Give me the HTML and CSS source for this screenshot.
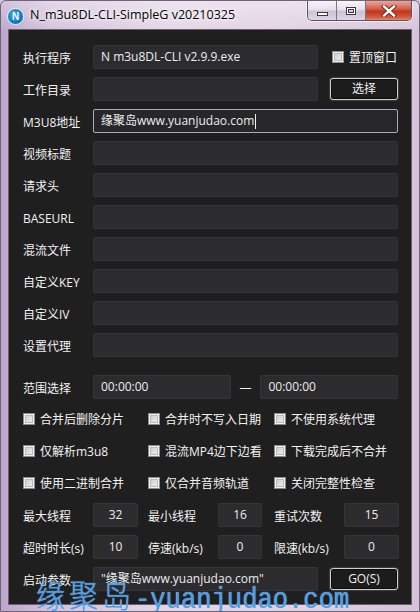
FILE: index.html
```html
<!DOCTYPE html>
<html>
<head>
<meta charset="utf-8">
<link rel="stylesheet" href="styles.css">
</head>
<body>
<div class="window">
  <div class="titlebar">
    <span class="app-icon">N</span>
    <span class="title">N_m3u8DL-CLI-SimpleG v20210325</span>
    <div class="caption">
      <span class="cbtn min"><i></i></span>
      <span class="cbtn max"><i></i></span>
      <span class="cbtn close">
        <svg width="16" height="12" viewBox="0 0 16 12"><path d="M3 1.5 L13 10.5 M13 1.5 L3 10.5" stroke="#5a2a22" stroke-width="4.2" stroke-linecap="square"/><path d="M3 1.5 L13 10.5 M13 1.5 L3 10.5" stroke="#ffffff" stroke-width="2.4" stroke-linecap="square"/></svg>
      </span>
    </div>
  </div>
  <div class="client">
    <div class="row">
      <span class="lbl">执行程序</span>
      <div class="field short">N m3u8DL-CLI v2.9.9.exe</div>
      <span class="chk topmost"><span class="box"></span>置顶窗口</span>
    </div>
    <div class="row">
      <span class="lbl">工作目录</span>
      <div class="field short"></div>
      <span class="btn">选择</span>
    </div>
    <div class="row">
      <span class="lbl">M3U8地址</span>
      <div class="field full focus">缘聚岛www.yuanjudao.com<span class="caret"></span></div>
    </div>
    <div class="row"><span class="lbl">视频标题</span><div class="field full"></div></div>
    <div class="row"><span class="lbl">请求头</span><div class="field full"></div></div>
    <div class="row"><span class="lbl">BASEURL</span><div class="field full"></div></div>
    <div class="row"><span class="lbl">混流文件</span><div class="field full"></div></div>
    <div class="row"><span class="lbl">自定义KEY</span><div class="field full"></div></div>
    <div class="row"><span class="lbl">自定义IV</span><div class="field full"></div></div>
    <div class="row"><span class="lbl">设置代理</span><div class="field full"></div></div>

    <div class="row range">
      <span class="lbl">范围选择</span>
      <div class="field half">00:00:00</div>
      <span class="dash">—</span>
      <div class="field half">00:00:00</div>
    </div>

    <div class="checks">
      <span class="chk"><span class="box"></span>合并后删除分片</span>
      <span class="chk"><span class="box"></span>合并时不写入日期</span>
      <span class="chk"><span class="box"></span>不使用系统代理</span>
    </div>
    <div class="checks">
      <span class="chk"><span class="box"></span>仅解析m3u8</span>
      <span class="chk"><span class="box"></span>混流MP4边下边看</span>
      <span class="chk"><span class="box"></span>下载完成后不合并</span>
    </div>
    <div class="checks">
      <span class="chk"><span class="box"></span>使用二进制合并</span>
      <span class="chk"><span class="box"></span>仅合并音频轨道</span>
      <span class="chk"><span class="box"></span>关闭完整性检查</span>
    </div>

    <div class="nums">
      <span class="lbl">最大线程</span><div class="field num n1">32</div>
      <span class="lbl">最小线程</span><div class="field num n2">16</div>
      <span class="lbl">重试次数</span><div class="field num n3">15</div>
    </div>
    <div class="nums">
      <span class="lbl">超时时长(s)</span><div class="field num n1">10</div>
      <span class="lbl">停速(kb/s)</span><div class="field num n2">0</div>
      <span class="lbl">限速(kb/s)</span><div class="field num n3">0</div>
    </div>

    <div class="row">
      <span class="lbl">启动参数</span>
      <div class="field short">"缘聚岛www.yuanjudao.com"</div>
      <span class="btn">GO(S)</span>
    </div>
  </div>
  <div class="watermark"><span class="wm-cjk">缘聚岛</span><span class="wm-lat">-yuanjudao.com</span></div>
</div>
</body>
</html>
```

FILE: styles.css
```css
html, body {
  margin: 0;
  padding: 0;
  width: 420px;
  height: 612px;
  overflow: hidden;
  background: #d8c8dc;
}

.window {
  position: relative;
  width: 420px;
  height: 612px;
  box-sizing: border-box;
  border: 1px solid #6f6478;
  border-radius: 6px 6px 0 0;
  background: linear-gradient(90deg, #bca6cc 0%, #d4c2dc 12%, #e4d6e6 40%, #e2d2e2 70%, #d6c2da 100%);
  display: flex;
  flex-direction: column;
  font-family: "Open Sans", "Noto Sans CJK SC", sans-serif;
  font-size: 12px;
  overflow: hidden;
}

.titlebar {
  height: 28px;
  display: flex;
  align-items: flex-start;
  flex-shrink: 0;
  background: linear-gradient(180deg, rgba(255,255,255,0.35), rgba(255,255,255,0.05));
}

.app-icon {
  margin: 7px 0 0 6px;
  width: 15px;
  height: 15px;
  border-radius: 50%;
  background: radial-gradient(circle at 40% 35%, #3da8f0, #0b6fc8 70%, #0a4f98);
  border: 1px solid #e8f2fb;
  color: #fff;
  font-family: "Liberation Sans", sans-serif;
  font-weight: bold;
  font-size: 10px;
  line-height: 15px;
  text-align: center;
  box-sizing: content-box;
}

.title {
  margin: 5px 0 0 6px;
  color: #000;
  font-family: "Open Sans", sans-serif;
  font-size: 12.5px;
  line-height: 18px;
  text-shadow: 0 0 6px rgba(255,255,255,0.9), 0 0 3px rgba(255,255,255,0.9);
}

.caption {
  margin-left: auto;
  margin-right: 7px;
  display: flex;
  height: 19px;
  border: 1px solid #5b5562;
  border-top: none;
  border-radius: 0 0 5px 5px;
  overflow: hidden;
  box-shadow: 0 0 0 1px rgba(255,255,255,0.55);
}

.cbtn {
  display: flex;
  align-items: center;
  justify-content: center;
  height: 19px;
}

.cbtn.min, .cbtn.max {
  width: 28px;
  background: linear-gradient(180deg, rgba(255,255,255,0.7) 0%, rgba(232,226,238,0.6) 45%, rgba(196,186,206,0.7) 55%, rgba(220,212,228,0.7) 100%);
  border-right: 1px solid #7d7585;
}

.cbtn.min i {
  display: block;
  width: 9px;
  height: 2px;
  margin-top: 6px;
  background: #fff;
  border: 1px solid #3c3844;
}

.cbtn.max i {
  display: block;
  width: 8px;
  height: 6px;
  background: transparent;
  border: 1px solid #3c3844;
  box-shadow: inset 0 0 0 1px #fff, inset 0 0 0 2px #3c3844;
}

.cbtn.close {
  width: 45px;
  background: linear-gradient(180deg, #e8a79a 0%, #d4624e 40%, #c2351f 55%, #d45a3e 85%, #e28a6a 100%);
}

.client {
  flex: 1;
  margin: 0 7px 6px 7px;
  background: #1f1f1f;
  border: 1px solid #6a6070;
  padding: 15px 13px 0 14px;
  display: flex;
  flex-direction: column;
  gap: 8px;
  color: #ececec;
  font-family: "Open Sans", "Noto Sans CJK SC", sans-serif;
  font-size: 12px;
}

.row {
  display: flex;
  align-items: center;
  height: 24px;
}

.row.range {
  margin-top: 10px;
}

.lbl {
  width: 70px;
  flex-shrink: 0;
  white-space: nowrap;
  color: #f2f2f2;
  padding-top: 2px;
}

.field {
  height: 24px;
  box-sizing: border-box;
  background: #2c2c2f;
  border: 1px solid #353538;
  border-radius: 2px;
  padding-left: 7px;
  line-height: 22px;
  color: #ededed;
  white-space: nowrap;
  overflow: hidden;
}

.field.short { width: 225px; }
.field.full { width: 306px; }
.field.half { width: 138px; }

.field.focus {
  border-color: #9fb0c2;
  background: #27272a;
}

.caret {
  display: inline-block;
  width: 1px;
  height: 15px;
  background: #f0f0f0;
  vertical-align: middle;
  margin-left: 1px;
}

.dash {
  width: 30px;
  text-align: center;
  color: #f2f2f2;
}

.btn {
  margin-left: 12px;
  width: 68px;
  height: 22px;
  box-sizing: border-box;
  border: 1px solid #cfcfcf;
  border-radius: 3px;
  background: #1c1c1c;
  box-shadow: inset 0 0 0 1px #0e0e0e, 0 0 1px 1px rgba(120,120,120,0.35);
  color: #f0f0f0;
  text-align: center;
  line-height: 20px;
}

.chk {
  display: flex;
  align-items: center;
  gap: 5px;
  white-space: nowrap;
  color: #f2f2f2;
}

.chk.topmost {
  margin-left: 14px;
}

.box {
  width: 12px;
  height: 12px;
  box-sizing: border-box;
  border: 1px solid #8c8c8c;
  background: linear-gradient(135deg, #c8c8c8 0%, #e2e2e2 60%, #f2f2f2 100%);
  box-shadow: inset 0 0 0 1px #f4f4f4, inset 0 0 0 2px #b8b8b8;
  flex-shrink: 0;
}

.checks {
  display: grid;
  grid-template-columns: 125px 126px 1fr;
  align-items: center;
  height: 24px;
}

.nums {
  display: grid;
  grid-template-columns: 70px 55px 70px 56px 70px 55px;
  align-items: center;
  height: 24px;
}

.field.num {
  padding-left: 0;
  text-align: center;
}
.field.n1 { width: 45px; }
.field.n2 { width: 44px; }
.field.n3 { width: 55px; }

.watermark {
  position: absolute;
  left: 35px;
  top: 574px;
  color: #4a9fe8;
  white-space: nowrap;
  line-height: 40px;
  text-shadow: 0 0 1px #9fd0ff;
  pointer-events: none;
  transform: scaleY(1.15);
  transform-origin: 0 32px;
}

.wm-cjk {
  font-family: "Noto Sans CJK SC", sans-serif;
  font-weight: 300;
  font-size: 29px;
  letter-spacing: 4px;
}

.wm-lat {
  font-family: "Liberation Mono", monospace;
  font-size: 25.5px;
  letter-spacing: 0;
}
```
